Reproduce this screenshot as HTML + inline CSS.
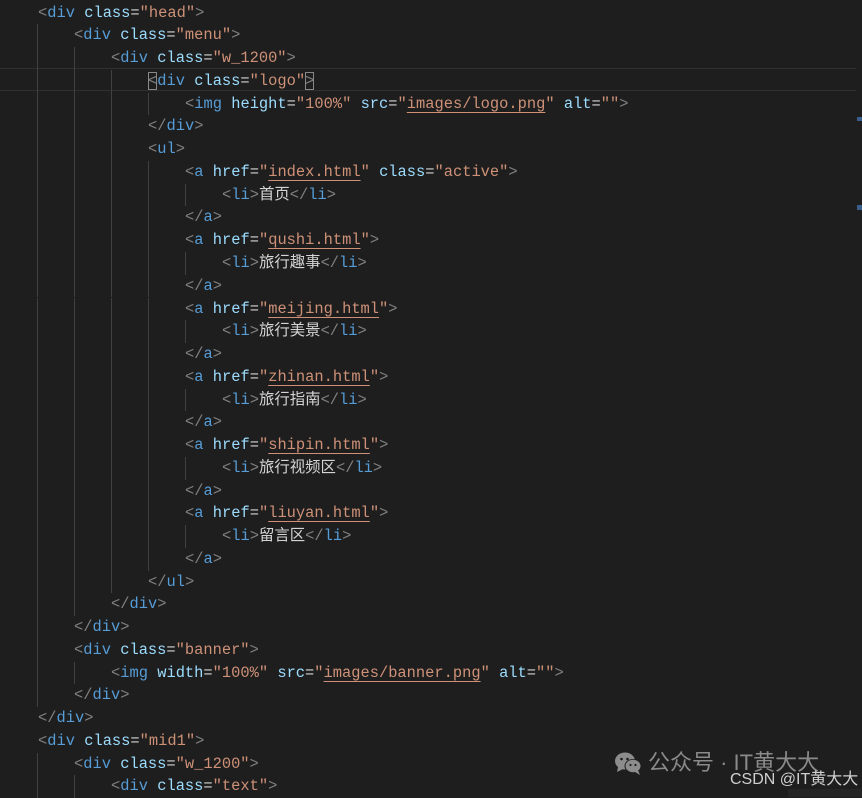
<!DOCTYPE html>
<html><head><meta charset="utf-8"><style>
html,body{margin:0;padding:0;background:#1e1e1e;width:862px;height:797px;overflow:hidden}
#c{position:absolute;left:0;top:0;width:862px;height:797px;font-family:"Liberation Mono","Noto Sans CJK SC",monospace;font-size:15.4px;color:#d4d4d4}
.ln{position:absolute;left:0;height:22.76px;line-height:22.76px;white-space:pre;width:856px;background-repeat:no-repeat;background-position:1px 0;background-image:repeating-linear-gradient(90deg,transparent 0 36px,#404040 36px 37px);margin-top:1px}
.b{color:#808080}.t{color:#569cd6}.a{color:#9cdcfe}.s{color:#ce9178}
.u{text-decoration:underline;text-decoration-color:#ce9178;text-underline-offset:4px}
.cur{position:absolute;left:0;top:68px;width:856px;height:21px;border-top:1px solid #303030;border-bottom:1px solid #303030}
.br{outline:1px solid #888;outline-offset:-1px}
</style></head><body><div id="c">
<div class="cur"></div>
<div class="ln" style="top:0.6px;padding-left:38px;width:818px;background-size:0 0"><span class="b">&lt;</span><span class="t">div</span> <span class="a">class</span>=<span class="s">"head"</span><span class="b">&gt;</span></div>
<div class="ln" style="top:23.4px;padding-left:74px;width:782px;background-size:38px 100%"><span class="b">&lt;</span><span class="t">div</span> <span class="a">class</span>=<span class="s">"menu"</span><span class="b">&gt;</span></div>
<div class="ln" style="top:46.1px;padding-left:111px;width:745px;background-size:75px 100%"><span class="b">&lt;</span><span class="t">div</span> <span class="a">class</span>=<span class="s">"w_1200"</span><span class="b">&gt;</span></div>
<div class="ln" style="top:68.9px;padding-left:148px;width:708px;background-size:112px 100%"><span class="b br">&lt;</span><span class="t">div</span> <span class="a">class</span>=<span class="s">"logo"</span><span class="b br">&gt;</span></div>
<div class="ln" style="top:91.6px;padding-left:185px;width:671px;background-size:149px 100%"><span class="b">&lt;</span><span class="t">img</span> <span class="a">height</span>=<span class="s">"100%"</span> <span class="a">src</span>=<span class="s">"<span class="u">images/logo.png</span>"</span> <span class="a">alt</span>=<span class="s">""</span><span class="b">&gt;</span></div>
<div class="ln" style="top:114.4px;padding-left:148px;width:708px;background-size:112px 100%"><span class="b">&lt;/</span><span class="t">div</span><span class="b">&gt;</span></div>
<div class="ln" style="top:137.2px;padding-left:148px;width:708px;background-size:112px 100%"><span class="b">&lt;</span><span class="t">ul</span><span class="b">&gt;</span></div>
<div class="ln" style="top:159.9px;padding-left:185px;width:671px;background-size:149px 100%"><span class="b">&lt;</span><span class="t">a</span> <span class="a">href</span>=<span class="s">"<span class="u">index.html</span>"</span> <span class="a">class</span>=<span class="s">"active"</span><span class="b">&gt;</span></div>
<div class="ln" style="top:182.7px;padding-left:222px;width:634px;background-size:186px 100%"><span class="b">&lt;</span><span class="t">li</span><span class="b">&gt;</span>首页<span class="b">&lt;/</span><span class="t">li</span><span class="b">&gt;</span></div>
<div class="ln" style="top:205.4px;padding-left:185px;width:671px;background-size:149px 100%"><span class="b">&lt;/</span><span class="t">a</span><span class="b">&gt;</span></div>
<div class="ln" style="top:228.2px;padding-left:185px;width:671px;background-size:149px 100%"><span class="b">&lt;</span><span class="t">a</span> <span class="a">href</span>=<span class="s">"<span class="u">qushi.html</span>"</span><span class="b">&gt;</span></div>
<div class="ln" style="top:251px;padding-left:222px;width:634px;background-size:186px 100%"><span class="b">&lt;</span><span class="t">li</span><span class="b">&gt;</span>旅行趣事<span class="b">&lt;/</span><span class="t">li</span><span class="b">&gt;</span></div>
<div class="ln" style="top:273.7px;padding-left:185px;width:671px;background-size:149px 100%"><span class="b">&lt;/</span><span class="t">a</span><span class="b">&gt;</span></div>
<div class="ln" style="top:296.5px;padding-left:185px;width:671px;background-size:149px 100%"><span class="b">&lt;</span><span class="t">a</span> <span class="a">href</span>=<span class="s">"<span class="u">meijing.html</span>"</span><span class="b">&gt;</span></div>
<div class="ln" style="top:319.2px;padding-left:222px;width:634px;background-size:186px 100%"><span class="b">&lt;</span><span class="t">li</span><span class="b">&gt;</span>旅行美景<span class="b">&lt;/</span><span class="t">li</span><span class="b">&gt;</span></div>
<div class="ln" style="top:342px;padding-left:185px;width:671px;background-size:149px 100%"><span class="b">&lt;/</span><span class="t">a</span><span class="b">&gt;</span></div>
<div class="ln" style="top:364.8px;padding-left:185px;width:671px;background-size:149px 100%"><span class="b">&lt;</span><span class="t">a</span> <span class="a">href</span>=<span class="s">"<span class="u">zhinan.html</span>"</span><span class="b">&gt;</span></div>
<div class="ln" style="top:387.5px;padding-left:222px;width:634px;background-size:186px 100%"><span class="b">&lt;</span><span class="t">li</span><span class="b">&gt;</span>旅行指南<span class="b">&lt;/</span><span class="t">li</span><span class="b">&gt;</span></div>
<div class="ln" style="top:410.3px;padding-left:185px;width:671px;background-size:149px 100%"><span class="b">&lt;/</span><span class="t">a</span><span class="b">&gt;</span></div>
<div class="ln" style="top:433px;padding-left:185px;width:671px;background-size:149px 100%"><span class="b">&lt;</span><span class="t">a</span> <span class="a">href</span>=<span class="s">"<span class="u">shipin.html</span>"</span><span class="b">&gt;</span></div>
<div class="ln" style="top:455.8px;padding-left:222px;width:634px;background-size:186px 100%"><span class="b">&lt;</span><span class="t">li</span><span class="b">&gt;</span>旅行视频区<span class="b">&lt;/</span><span class="t">li</span><span class="b">&gt;</span></div>
<div class="ln" style="top:478.6px;padding-left:185px;width:671px;background-size:149px 100%"><span class="b">&lt;/</span><span class="t">a</span><span class="b">&gt;</span></div>
<div class="ln" style="top:501.3px;padding-left:185px;width:671px;background-size:149px 100%"><span class="b">&lt;</span><span class="t">a</span> <span class="a">href</span>=<span class="s">"<span class="u">liuyan.html</span>"</span><span class="b">&gt;</span></div>
<div class="ln" style="top:524.1px;padding-left:222px;width:634px;background-size:186px 100%"><span class="b">&lt;</span><span class="t">li</span><span class="b">&gt;</span>留言区<span class="b">&lt;/</span><span class="t">li</span><span class="b">&gt;</span></div>
<div class="ln" style="top:546.8px;padding-left:185px;width:671px;background-size:149px 100%"><span class="b">&lt;/</span><span class="t">a</span><span class="b">&gt;</span></div>
<div class="ln" style="top:569.6px;padding-left:148px;width:708px;background-size:112px 100%"><span class="b">&lt;/</span><span class="t">ul</span><span class="b">&gt;</span></div>
<div class="ln" style="top:592.4px;padding-left:111px;width:745px;background-size:75px 100%"><span class="b">&lt;/</span><span class="t">div</span><span class="b">&gt;</span></div>
<div class="ln" style="top:615.1px;padding-left:74px;width:782px;background-size:38px 100%"><span class="b">&lt;/</span><span class="t">div</span><span class="b">&gt;</span></div>
<div class="ln" style="top:637.9px;padding-left:74px;width:782px;background-size:38px 100%"><span class="b">&lt;</span><span class="t">div</span> <span class="a">class</span>=<span class="s">"banner"</span><span class="b">&gt;</span></div>
<div class="ln" style="top:660.6px;padding-left:111px;width:745px;background-size:75px 100%"><span class="b">&lt;</span><span class="t">img</span> <span class="a">width</span>=<span class="s">"100%"</span> <span class="a">src</span>=<span class="s">"<span class="u">images/banner.png</span>"</span> <span class="a">alt</span>=<span class="s">""</span><span class="b">&gt;</span></div>
<div class="ln" style="top:683.4px;padding-left:74px;width:782px;background-size:38px 100%"><span class="b">&lt;/</span><span class="t">div</span><span class="b">&gt;</span></div>
<div class="ln" style="top:706.2px;padding-left:38px;width:818px;background-size:0 0"><span class="b">&lt;/</span><span class="t">div</span><span class="b">&gt;</span></div>
<div class="ln" style="top:728.9px;padding-left:38px;width:818px;background-size:0 0"><span class="b">&lt;</span><span class="t">div</span> <span class="a">class</span>=<span class="s">"mid1"</span><span class="b">&gt;</span></div>
<div class="ln" style="top:751.7px;padding-left:74px;width:782px;background-size:38px 100%"><span class="b">&lt;</span><span class="t">div</span> <span class="a">class</span>=<span class="s">"w_1200"</span><span class="b">&gt;</span></div>
<div class="ln" style="top:774.4px;padding-left:111px;width:745px;background-size:75px 100%"><span class="b">&lt;</span><span class="t">div</span> <span class="a">class</span>=<span class="s">"text"</span><span class="b">&gt;</span></div>
<div style="position:absolute;left:857px;top:117px;width:5px;height:4px;background:#3a5f8a"></div>
<div style="position:absolute;left:857px;top:205px;width:5px;height:5px;background:#3a5f8a"></div>
<svg style="position:absolute;left:614px;top:751px" width="30" height="26" viewBox="0 0 30 26"><ellipse cx="11" cy="10" rx="10" ry="8.5" fill="#8c8c8c"/><path d="M4 16 L3 21 L9 18Z" fill="#8c8c8c"/><ellipse cx="19" cy="15" rx="8.5" ry="7" fill="#1e1e1e"/><ellipse cx="19" cy="15" rx="7.5" ry="6.2" fill="#8c8c8c"/><path d="M24 19 L26 24 L21 21Z" fill="#8c8c8c"/><circle cx="7.5" cy="8" r="1.3" fill="#1e1e1e"/><circle cx="13.5" cy="8" r="1.3" fill="#1e1e1e"/><circle cx="16.5" cy="14" r="1.1" fill="#1e1e1e"/><circle cx="21.5" cy="14" r="1.1" fill="#1e1e1e"/></svg>
<div style="position:absolute;left:648px;top:748px;font-family:'Liberation Sans','Noto Sans CJK SC',sans-serif;font-size:22px;line-height:30px;color:#8a8a8a;white-space:nowrap">公众号 · IT黄大大</div>
<div style="position:absolute;left:788px;top:789px;width:74px;height:8px;background:#252526"></div>
<div style="position:absolute;left:730px;top:769px;font-family:'Liberation Sans','Noto Sans CJK SC',sans-serif;font-size:16px;line-height:22px;color:#cfcfcf;white-space:nowrap">CSDN @IT黄大大</div>
</div></body></html>
